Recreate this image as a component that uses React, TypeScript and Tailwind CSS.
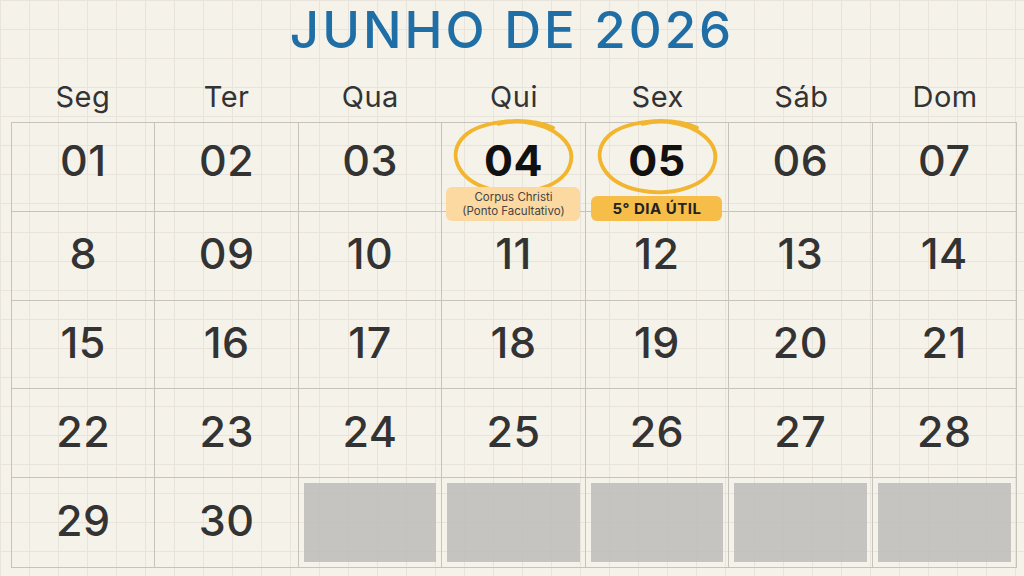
import React from "react";

const weekdays = ["Seg", "Ter", "Qua", "Qui", "Sex", "Sáb", "Dom"];

const days: (string | null)[] = [
  "01", "02", "03", "04", "05", "06", "07",
  "8", "09", "10", "11", "12", "13", "14",
  "15", "16", "17", "18", "19", "20", "21",
  "22", "23", "24", "25", "26", "27", "28",
  "29", "30", null, null, null, null, null,
];

function Loop() {
  return (
    <svg
      viewBox="0 0 130 84"
      className="absolute left-1/2 top-[-7px] h-[82px] w-[128px] -translate-x-1/2"
      fill="none"
    >
      <path
        d="M106 12 C78 0 28 4 12 24 C-2 42 10 68 46 76 C80 83 118 72 124 48 C129 28 108 10 76 6 C66 5 58 6 50 8"
        stroke="#f1b530"
        strokeWidth="4"
        strokeLinecap="round"
      />
    </svg>
  );
}

export default function App() {
  return (
    <div className="w-[1024px] h-[576px] overflow-hidden flex flex-col bg-[#f5f2ea] bg-[linear-gradient(to_right,#e8e4db_1px,transparent_1px),linear-gradient(to_bottom,#e8e4db_1px,transparent_1px)] bg-[size:29px_29px] font-['Inter',sans-serif] text-[#333]">
      {/* Título */}
      <h1 className="h-[68px] pt-[3px] text-center text-[51px] font-medium leading-[54px] tracking-[3px] text-[#1f6ea5]">
        JUNHO DE 2026
      </h1>

      {/* Dias da semana */}
      <div className="ml-[11px] grid w-[1006px] grid-cols-7 h-[54px] pt-[4px]">
        {weekdays.map((d) => (
          <div key={d} className="flex items-center justify-center text-[29px] tracking-[0.5px] text-[#333]">
            {d}
          </div>
        ))}
      </div>

      {/* Grade */}
      <div className="ml-[11px] grid h-[446px] w-[1006px] grid-cols-7 grid-rows-5 border border-[#c6c3bc]">
        {days.map((d, i) => {
          const col = i % 7;
          const row = Math.floor(i / 7);
          const borders = `${col < 6 ? "border-r" : ""} ${row < 4 ? "border-b" : ""}`;
          const special = d === "04" || d === "05";

          if (d === null) {
            return (
              <div key={i} className={`${borders} border-[#c6c3bc] p-[5px]`}>
                <div className="h-full w-full bg-[#bdbcb8]/85" />
              </div>
            );
          }

          return (
            <div
              key={i}
              className={`${borders} border-[#c6c3bc] relative flex flex-col items-center ${
                row === 0 ? "justify-start pt-[15px]" : "justify-center pb-[5px]"
              }`}
            >
              {special && <Loop />}
              <span
                className={`relative text-[43px] leading-[44px] tracking-[0.5px] ${
                  special ? "font-bold text-[#111]" : "font-medium text-[#333]"
                }`}
              >
                {d}
              </span>
              {d === "04" && (
                <div className="relative mt-[5px] w-[134px] rounded-md bg-[#fbd9a0] py-[3px] text-center text-[11.5px] leading-[14px] text-[#444]">
                  Corpus Christi
                  <br />
                  (Ponto Facultativo)
                </div>
              )}
              {d === "05" && (
                <div className="relative mt-[14px] w-[131px] rounded-md bg-[#f6bd48] text-center text-[15px] font-bold leading-[25px] tracking-[0.5px] text-[#222]">
                  5° DIA ÚTIL
                </div>
              )}
            </div>
          );
        })}
      </div>
    </div>
  );
}
